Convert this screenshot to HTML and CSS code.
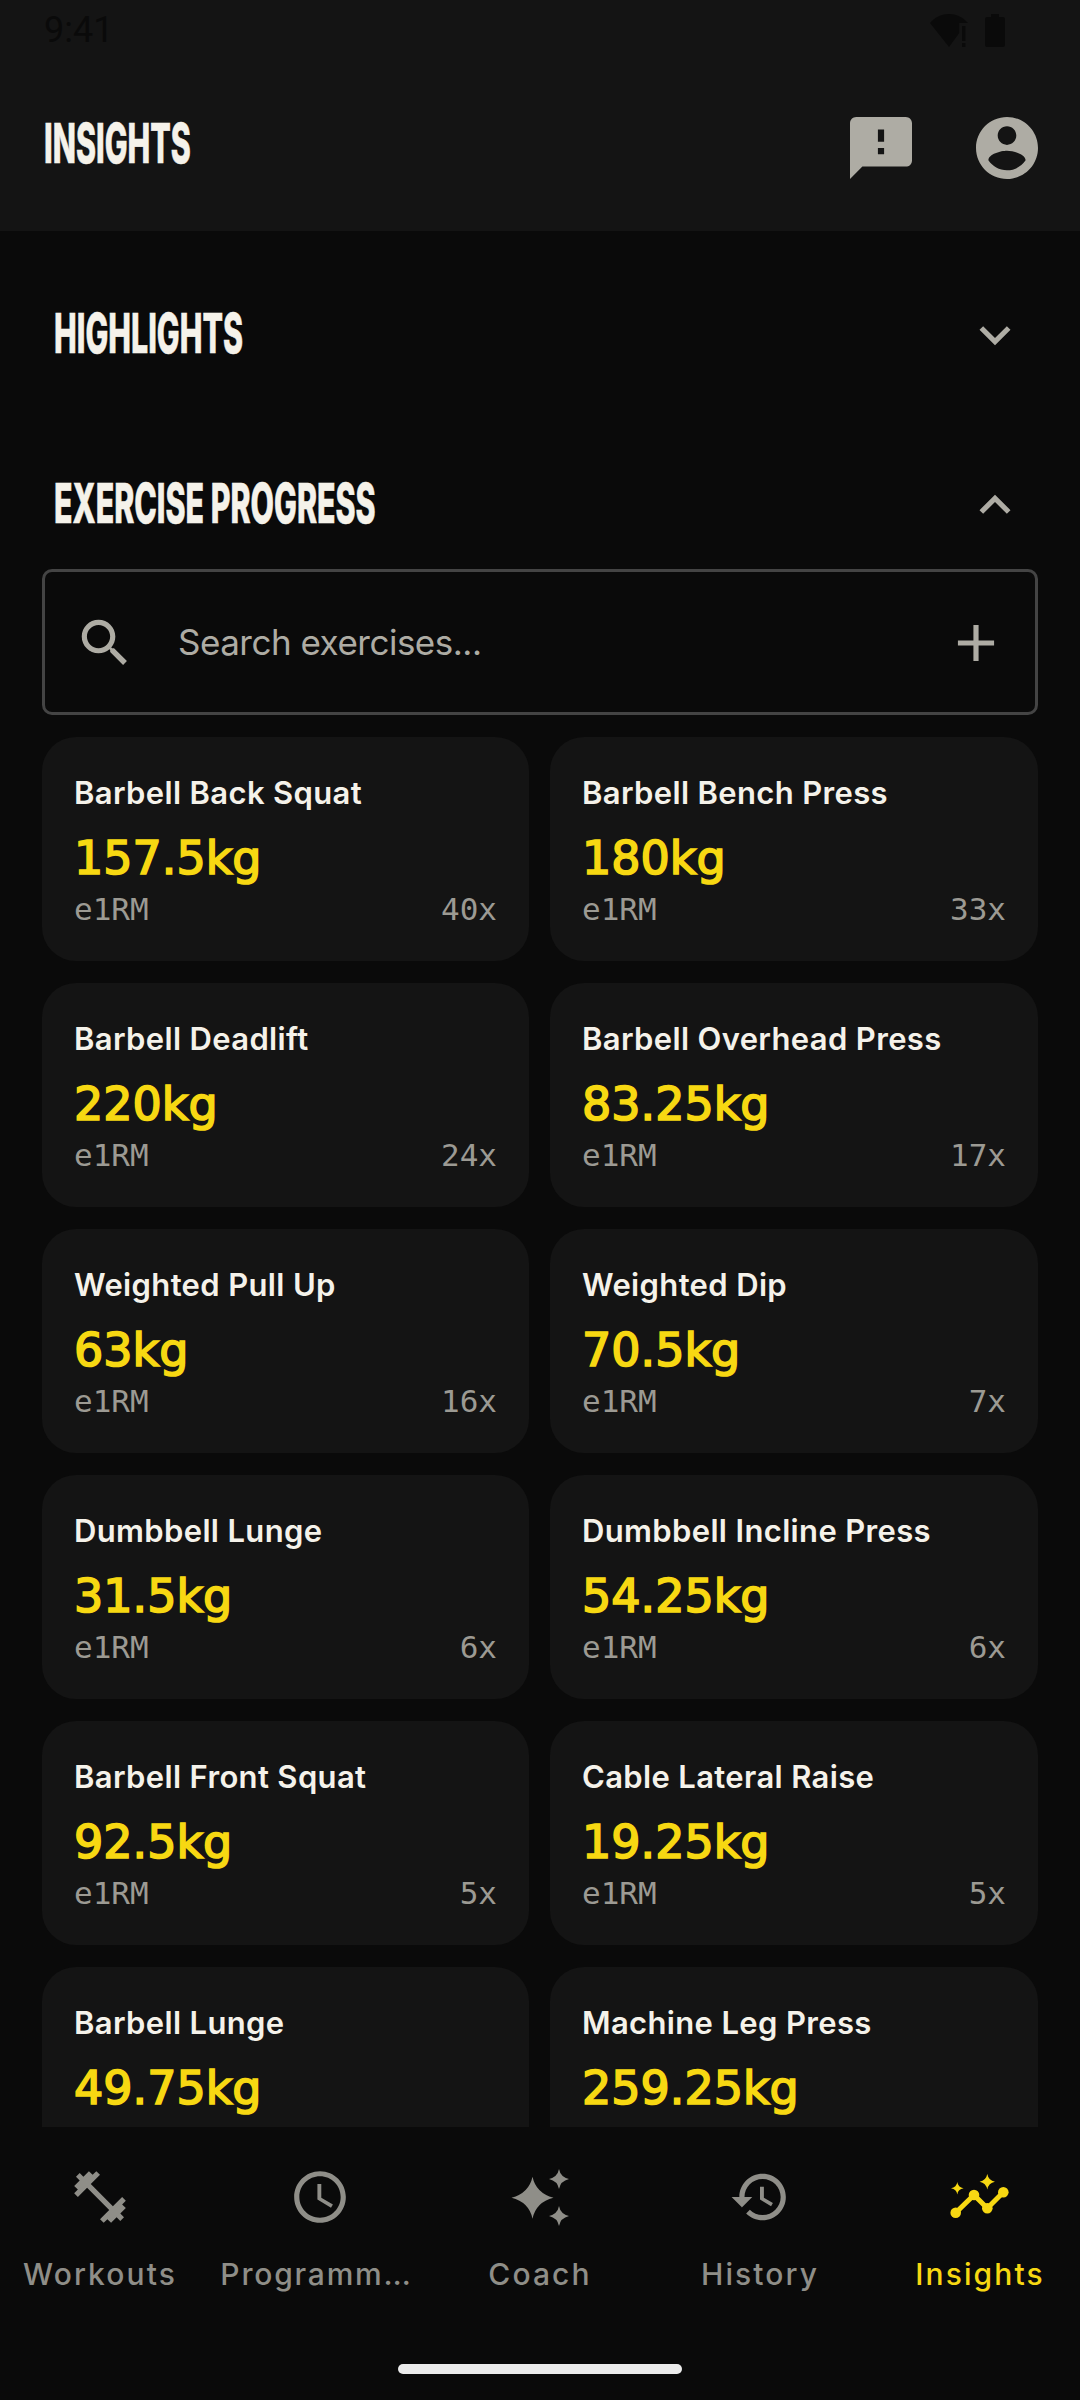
FILE: index.html
```html
<!DOCTYPE html>
<html lang="en">
<head>
<meta charset="utf-8">
<title>Insights</title>
<link rel="stylesheet" href="styles.css">
</head>
<body>
<div class="app">
  <header class="topbar">
    <div class="status">
      <span class="time">9:41</span>
      <span class="status-icons">
        <svg class="wifi" viewBox="0 0 38 33"><path d="M0 9C5 3 12 0 19 0s14 3 19 9h-8.700v10L19 33z"/><rect x="32" y="12" width="3.500" height="15"/><rect x="32" y="29" width="3.500" height="4"/></svg>
        <svg class="batt" viewBox="0 0 20 33"><path d="M6 0h8v3h4a2 2 0 0 1 2 2v26a2 2 0 0 1-2 2H2a2 2 0 0 1-2-2V5a2 2 0 0 1 2-2h4z"/></svg>
      </span>
    </div>
    <div class="appbar">
      <h1 class="display"><span>INSIGHTS</span></h1>
      <div class="actions">
        <svg class="icon-lg" viewBox="2 2 20 20"><path fill-rule="evenodd" d="M20 2H4c-1.100 0-2 .9-2 2v18l4-4h14c1.100 0 2-.9 2-2V4c0-1.100-.9-2-2-2zm-7 12h-2v-2h2v2zm0-4h-2V6h2v4z"/></svg>
        <svg class="icon-lg" viewBox="2 2 20 20"><path fill-rule="evenodd" d="M12 2C6.480 2 2 6.480 2 12s4.480 10 10 10 10-4.480 10-10S17.520 2 12 2zm0 3c1.660 0 3 1.340 3 3s-1.340 3-3 3-3-1.340-3-3 1.340-3 3-3zm0 14.200c-2.500 0-4.710-1.280-6-3.220.03-1.990 4-3.080 6-3.080 1.990 0 5.970 1.090 6 3.080-1.290 1.940-3.500 3.220-6 3.220z"/></svg>
      </div>
    </div>
  </header>

  <main class="content">
    <section class="section-row first">
      <h2 class="display"><span>HIGHLIGHTS</span></h2>
      <svg class="chev" viewBox="0 0 24 24"><path d="M16.590 8.590 12 13.170 7.410 8.590 6 10l6 6 6-6z"/></svg>
    </section>
    <section class="section-row second">
      <h2 class="display"><span>EXERCISE PROGRESS</span></h2>
      <svg class="chev" viewBox="0 0 24 24"><path d="M12 8l-6 6 1.410 1.410L12 10.830l4.590 4.580L18 14z"/></svg>
    </section>

    <div class="search">
      <svg class="search-icon" viewBox="0 0 24 24"><path d="M15.500 14h-.79l-.28-.27C15.410 12.590 16 11.110 16 9.500 16 5.910 13.090 3 9.500 3S3 5.910 3 9.500 5.910 16 9.500 16c1.610 0 3.090-.59 4.230-1.570l.27.28v.79l5 4.990L20.490 19l-4.990-5zm-6 0C7.010 14 5 11.990 5 9.500S7.010 5 9.500 5 14 7.010 14 9.500 11.990 14 9.500 14z"/></svg>
      <span class="search-text">Search exercises...</span>
      <svg class="plus-icon" viewBox="0 0 24 24"><path d="M19 13h-6v6h-2v-6H5v-2h6V5h2v6h6v2z"/></svg>
    </div>

    <div class="grid">
      <article class="card"><h3>Barbell Back Squat</h3><p class="value">157.5kg</p><div class="meta"><span>e1RM</span><span>40x</span></div></article>
      <article class="card"><h3>Barbell Bench Press</h3><p class="value">180kg</p><div class="meta"><span>e1RM</span><span>33x</span></div></article>
      <article class="card"><h3>Barbell Deadlift</h3><p class="value">220kg</p><div class="meta"><span>e1RM</span><span>24x</span></div></article>
      <article class="card"><h3>Barbell Overhead Press</h3><p class="value">83.25kg</p><div class="meta"><span>e1RM</span><span>17x</span></div></article>
      <article class="card"><h3>Weighted Pull Up</h3><p class="value">63kg</p><div class="meta"><span>e1RM</span><span>16x</span></div></article>
      <article class="card"><h3>Weighted Dip</h3><p class="value">70.5kg</p><div class="meta"><span>e1RM</span><span>7x</span></div></article>
      <article class="card"><h3>Dumbbell Lunge</h3><p class="value">31.5kg</p><div class="meta"><span>e1RM</span><span>6x</span></div></article>
      <article class="card"><h3>Dumbbell Incline Press</h3><p class="value">54.25kg</p><div class="meta"><span>e1RM</span><span>6x</span></div></article>
      <article class="card"><h3>Barbell Front Squat</h3><p class="value">92.5kg</p><div class="meta"><span>e1RM</span><span>5x</span></div></article>
      <article class="card"><h3>Cable Lateral Raise</h3><p class="value">19.25kg</p><div class="meta"><span>e1RM</span><span>5x</span></div></article>
      <article class="card"><h3>Barbell Lunge</h3><p class="value">49.75kg</p></article>
      <article class="card"><h3>Machine Leg Press</h3><p class="value">259.25kg</p></article>
    </div>
  </main>

  <nav class="tabs">
    <div class="tab">
      <svg class="tab-icon" viewBox="0 0 24 24"><path d="M20.570 14.860 22 13.430 20.570 12 17 15.570 8.430 7 12 3.430 10.570 2 9.140 3.430 7.710 2 5.570 4.140 4.140 2.710 2.710 4.140l1.430 1.430L2 7.710l1.430 1.430L2 10.570 3.430 12 7 8.430 15.570 17 12 20.570 13.430 22l1.430-1.430L16.290 22l2.140-2.140 1.430 1.430 1.430-1.430-1.430-1.430L22 16.290z"/></svg>
      <span class="tab-label">Workouts</span>
    </div>
    <div class="tab">
      <svg class="tab-icon" viewBox="0 0 24 24"><path fill-rule="evenodd" d="M11.990 2C6.470 2 2 6.480 2 12s4.470 10 9.990 10C17.520 22 22 17.520 22 12S17.520 2 11.990 2zM12 20c-4.420 0-8-3.580-8-8s3.580-8 8-8 8 3.580 8 8-3.580 8-8 8zm.5-13H11v6l5.250 3.150.75-1.230-4.500-2.670V7z"/></svg>
      <span class="tab-label truncated">Programm…</span>
    </div>
    <div class="tab">
      <svg class="tab-icon" viewBox="0 0 62 62"><path d="M23.500 10.700Q27 27 44.500 31.700 27 36 23.500 52.700 20 36 2.500 31.700 20 27 23.500 10.700z"/><path d="M50 3Q51.500 11 60 13 51.500 15 50 23 48.500 15 40 13 48.500 11 50 3z"/><path d="M50 40Q51.500 48 60 50 51.500 52 50 60 48.500 52 40 50 48.500 48 50 40z"/></svg>
      <span class="tab-label">Coach</span>
    </div>
    <div class="tab">
      <svg class="tab-icon" viewBox="0 0 24 24"><path d="M13 3c-4.970 0-9 4.030-9 9H1l3.890 3.890.07.14L9 12H6c0-3.870 3.130-7 7-7s7 3.130 7 7-3.130 7-7 7c-1.930 0-3.680-.79-4.940-2.060l-1.420 1.420C8.270 19.990 10.510 21 13 21c4.970 0 9-4.030 9-9s-4.030-9-9-9zm-1 5v5l4.280 2.540.72-1.210-3.500-2.080V8H12z"/></svg>
      <span class="tab-label">History</span>
    </div>
    <div class="tab active">
      <svg class="tab-icon" viewBox="0 0 62 62"><path d="M38.300 8Q39.500 14.500 46 15.700 39.500 17 38.300 23.400 37 17 30.600 15.700 37 14.500 38.300 8z"/><path d="M8.300 16Q9 21.500 14.600 22.300 9 23 8.300 28.600 7.500 23 2 22.300 7.500 21.500 8.300 16z"/><path class="trend" d="M6.700 46.700 25 29 38.300 42.300 54.300 26.300"/><circle cx="6.700" cy="46.700" r="5.300"/><circle cx="25" cy="29" r="5.300"/><circle cx="38.300" cy="42.300" r="5.300"/><circle cx="54.300" cy="26.300" r="5.300"/></svg>
      <span class="tab-label">Insights</span>
    </div>
    <div class="home-bar"></div>
  </nav>
</div>
</body>
</html>
```
FILE: styles.css
```css
* { box-sizing: border-box; }
html, body { margin: 0; padding: 0; background: #0a0a0a; }
.app { width: 1080px; height: 2400px; display: flex; flex-direction: column; overflow: hidden; background: #0a0a0a; }

.topbar { height: 231px; background: #141414; flex: none; }
.status { height: 56px; padding: 8px 75px 0 44px; display: flex; justify-content: space-between; }
.time { font: 400 36px/44px Roboto, sans-serif; color: #0a0a0a; }
.status-icons { display: flex; gap: 17px; padding-top: 6px; }
.wifi { width: 38px; height: 33px; fill: #0a0a0a; }
.batt { width: 20px; height: 33px; fill: #0a0a0a; }
.appbar { display: flex; justify-content: space-between; align-items: center; padding: 0 42px 0 44px; height: 122px; margin-top: 26px; }
.actions { display: flex; gap: 64px; margin-top: 9px; }
.icon-lg { width: 62px; height: 62px; fill: #aeaca4; display: block; }

.display { margin: 0; font: 800 55px/64px Inter, sans-serif; color: #f5f2ea; white-space: nowrap; -webkit-text-stroke: 0.6px #f5f2ea; }
.display span { display: inline-block; transform-origin: left center; transform: scaleX(0.552); }

.content { flex: 1; min-height: 0; overflow: hidden; padding: 0 42px; }
.section-row { display: flex; justify-content: space-between; align-items: center; padding-left: 12px; padding-right: 12px; height: 64px; }
.section-row.first { margin-top: 70px; }
.section-row.second { margin-top: 106px; }
.chev { width: 62px; height: 62px; fill: #aeaca4; display: block; margin-top: 3px; }

.search { margin-top: 34px; height: 146px; border: 3px solid #444; border-radius: 10px; display: flex; align-items: center; padding: 2px 28px 0 29px; }
.search-icon, .plus-icon { width: 62px; height: 62px; fill: #aeaca4; flex: none; }
.search-text { flex: 1; margin-left: 42px; margin-top: -2px; font: 400 35px/44px Inter, sans-serif; color: #aeaca4; letter-spacing: -0.5px; }

.grid { margin-top: 22px; display: grid; grid-template-columns: 487px 1fr; gap: 22px 21px; }
.card { height: 224px; background: #141414; border-radius: 34px; padding: 36px 32px 0; }
.card h3 { margin: 0; font: 600 31px/40px Inter, sans-serif; color: #f5f2ea; letter-spacing: 0.35px; white-space: nowrap; }
.value { margin: 18px 0 0; font: 400 46px/54px "DejaVu Sans", sans-serif; color: #f7d812; -webkit-text-stroke: 1.7px #f7d812; }
.meta { margin-top: 4px; display: flex; justify-content: space-between; font: 400 31px/40px "DejaVu Sans Mono", monospace; color: #9c9a93; }

.tabs { position: relative; flex: none; height: 273px; background: #0a0a0a; display: grid; grid-template-columns: 200px 240px 200px 240px 200px; align-items: start; }
.tab { display: flex; flex-direction: column; align-items: center; padding-top: 39px; color: #8f8e88; }
.tab.active { color: #f7d812; }
.tab-icon { width: 62px; height: 62px; fill: currentColor; display: block; }
.trend { fill: none; stroke: currentColor; stroke-width: 5; }
.tab-label { margin-top: 24px; font: 500 30px/44px Inter, sans-serif; letter-spacing: 2.1px; white-space: nowrap; }
.truncated { margin-right: 7px; letter-spacing: 1.8px; }
.home-bar { position: absolute; left: 398px; top: 237px; width: 284px; height: 10px; border-radius: 5px; background: #ececec; }
```
